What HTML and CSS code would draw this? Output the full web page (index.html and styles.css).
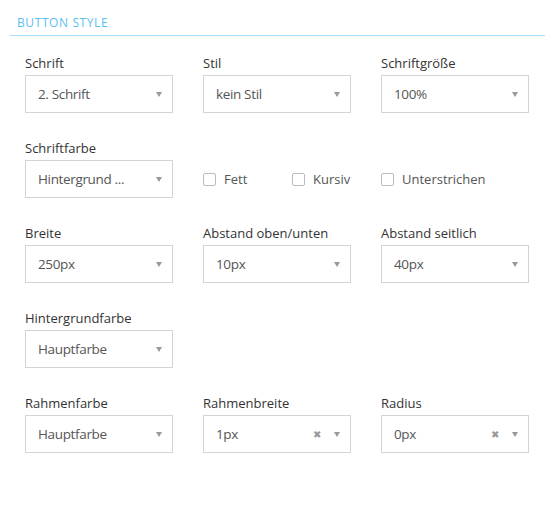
FILE: index.html
```html
<!DOCTYPE html>
<html>
<head>
<meta charset="utf-8">
<link rel="stylesheet" href="styles.css">
</head>
<body>
<div class="header"><span class="title">BUTTON STYLE</span></div>
<div class="grid">
  <div class="field"><div class="label">Schrift</div><div class="select"><span class="val">2. Schrift</span><span class="arrow"></span></div></div>
  <div class="field"><div class="label">Stil</div><div class="select"><span class="val">kein Stil</span><span class="arrow"></span></div></div>
  <div class="field"><div class="label">Schriftgröße</div><div class="select"><span class="val">100%</span><span class="arrow"></span></div></div>

  <div class="field"><div class="label">Schriftfarbe</div><div class="select"><span class="val">Hintergrund ...</span><span class="arrow"></span></div></div>
  <div class="checks">
    <label class="check c1"><span class="box"></span>Fett</label>
    <label class="check c1"><span class="box"></span>Kursiv</label>
    <label class="check"><span class="box"></span>Unterstrichen</label>
  </div>

  <div class="field"><div class="label">Breite</div><div class="select"><span class="val">250px</span><span class="arrow"></span></div></div>
  <div class="field"><div class="label">Abstand oben/unten</div><div class="select"><span class="val">10px</span><span class="arrow"></span></div></div>
  <div class="field"><div class="label">Abstand seitlich</div><div class="select"><span class="val">40px</span><span class="arrow"></span></div></div>

  <div class="field"><div class="label">Hintergrundfarbe</div><div class="select"><span class="val">Hauptfarbe</span><span class="arrow"></span></div></div>
  <div class="field empty"></div>
  <div class="field empty"></div>

  <div class="field"><div class="label">Rahmenfarbe</div><div class="select"><span class="val">Hauptfarbe</span><span class="arrow"></span></div></div>
  <div class="field"><div class="label">Rahmenbreite</div><div class="select"><span class="val">1px</span><span class="clear">&#x2716;</span><span class="arrow"></span></div></div>
  <div class="field"><div class="label">Radius</div><div class="select"><span class="val">0px</span><span class="clear">&#x2716;</span><span class="arrow"></span></div></div>
</div>
</body>
</html>
```
FILE: styles.css
```css
html, body { margin: 0; padding: 0; background: #fff; }
body {
  font-family: "Open Sans", "Lato", sans-serif;
  color: #333;
  width: 555px;
  height: 514px;
}
.header {
  margin: 0 10px;
  padding: 14px 0 5px 7px;
  border-bottom: 1px solid #a9dcf8;
  line-height: 14px;
}
.title {
  font-size: 12px;
  color: #5dbff0;
  letter-spacing: 0.6px;
}
.grid {
  display: grid;
  grid-template-columns: 148px 148px 148px;
  column-gap: 30px;
  row-gap: 27px;
  padding: 19px 0 0 25px;
}
.label {
  font-size: 13px;
  line-height: 16px;
  height: 16px;
  margin-bottom: 4px;
  color: #333;
}
.select {
  box-sizing: border-box;
  height: 38px;
  border: 1px solid #d4d4d4;
  display: flex;
  align-items: center;
  padding: 0 10px 0 12px;
  font-size: 13.5px;
  letter-spacing: -0.35px;
  color: #555;
}
.val { flex: 1; white-space: nowrap; }
.arrow {
  width: 0; height: 0;
  border-left: 3.5px solid transparent;
  border-right: 3.5px solid transparent;
  border-top: 5px solid #999;
}
.clear {
  font-size: 10px;
  color: #999;
  margin-right: 13px;
}
.checks {
  grid-column: 2 / 4;
  display: flex;
  align-items: center;
  padding-top: 20px;
  height: 38px;
}
.check {
  display: flex;
  align-items: center;
  font-size: 13px;
  color: #555;
}
.check.c1 { width: 89px; }
.box {
  width: 11px; height: 11px;
  border: 1px solid #bbb;
  border-radius: 2px;
  margin-right: 8px;
}
.empty { height: 58px; }
```
